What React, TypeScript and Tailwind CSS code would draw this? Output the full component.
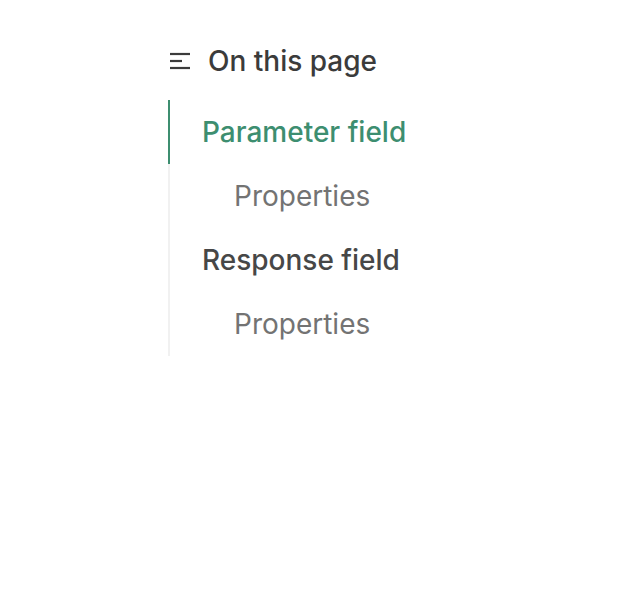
import React from 'react';

const items = [
  { label: 'Parameter field', depth: 0, active: true },
  { label: 'Properties', depth: 1, active: false },
  { label: 'Response field', depth: 0, active: false },
  { label: 'Properties', depth: 1, active: false },
];

function TocIcon() {
  return (
    <svg width="22" height="22" viewBox="0 0 22 22" fill="none" stroke="currentColor" strokeWidth="2.2">
      <path d="M0 3h20" />
      <path d="M0 10h12" />
      <path d="M0 17h20" />
    </svg>
  );
}

export default function App() {
  return (
    <div className="min-h-screen bg-white font-['Inter',sans-serif]">
      <div className="pl-[168px] pt-[43px]">
        <div className="flex items-center gap-[16px] text-[#3b3b3b]">
          <span className="ml-[2px] mt-[1px]"><TocIcon /></span>
          <span className="text-[28px] leading-[36px] font-medium">On this page</span>
        </div>
        <ul className="mt-[21px] border-l-2 border-[#f1f1f1] w-fit">
          {items.map((item, i) => (
            <li
              key={i}
              className={`-ml-[2px] border-l-2 h-[64px] flex items-center text-[28px] ${
                item.active ? 'border-[#3d8e70] text-[#3d8e70] font-medium' : 'border-transparent'
              } ${item.depth === 1 ? 'pl-[64px] text-[#737373]' : 'pl-[32px]'} ${
                !item.active && item.depth === 0 ? 'text-[#474747] font-medium' : ''
              }`}
            >
              {item.label}
            </li>
          ))}
        </ul>
      </div>
    </div>
  );
}
